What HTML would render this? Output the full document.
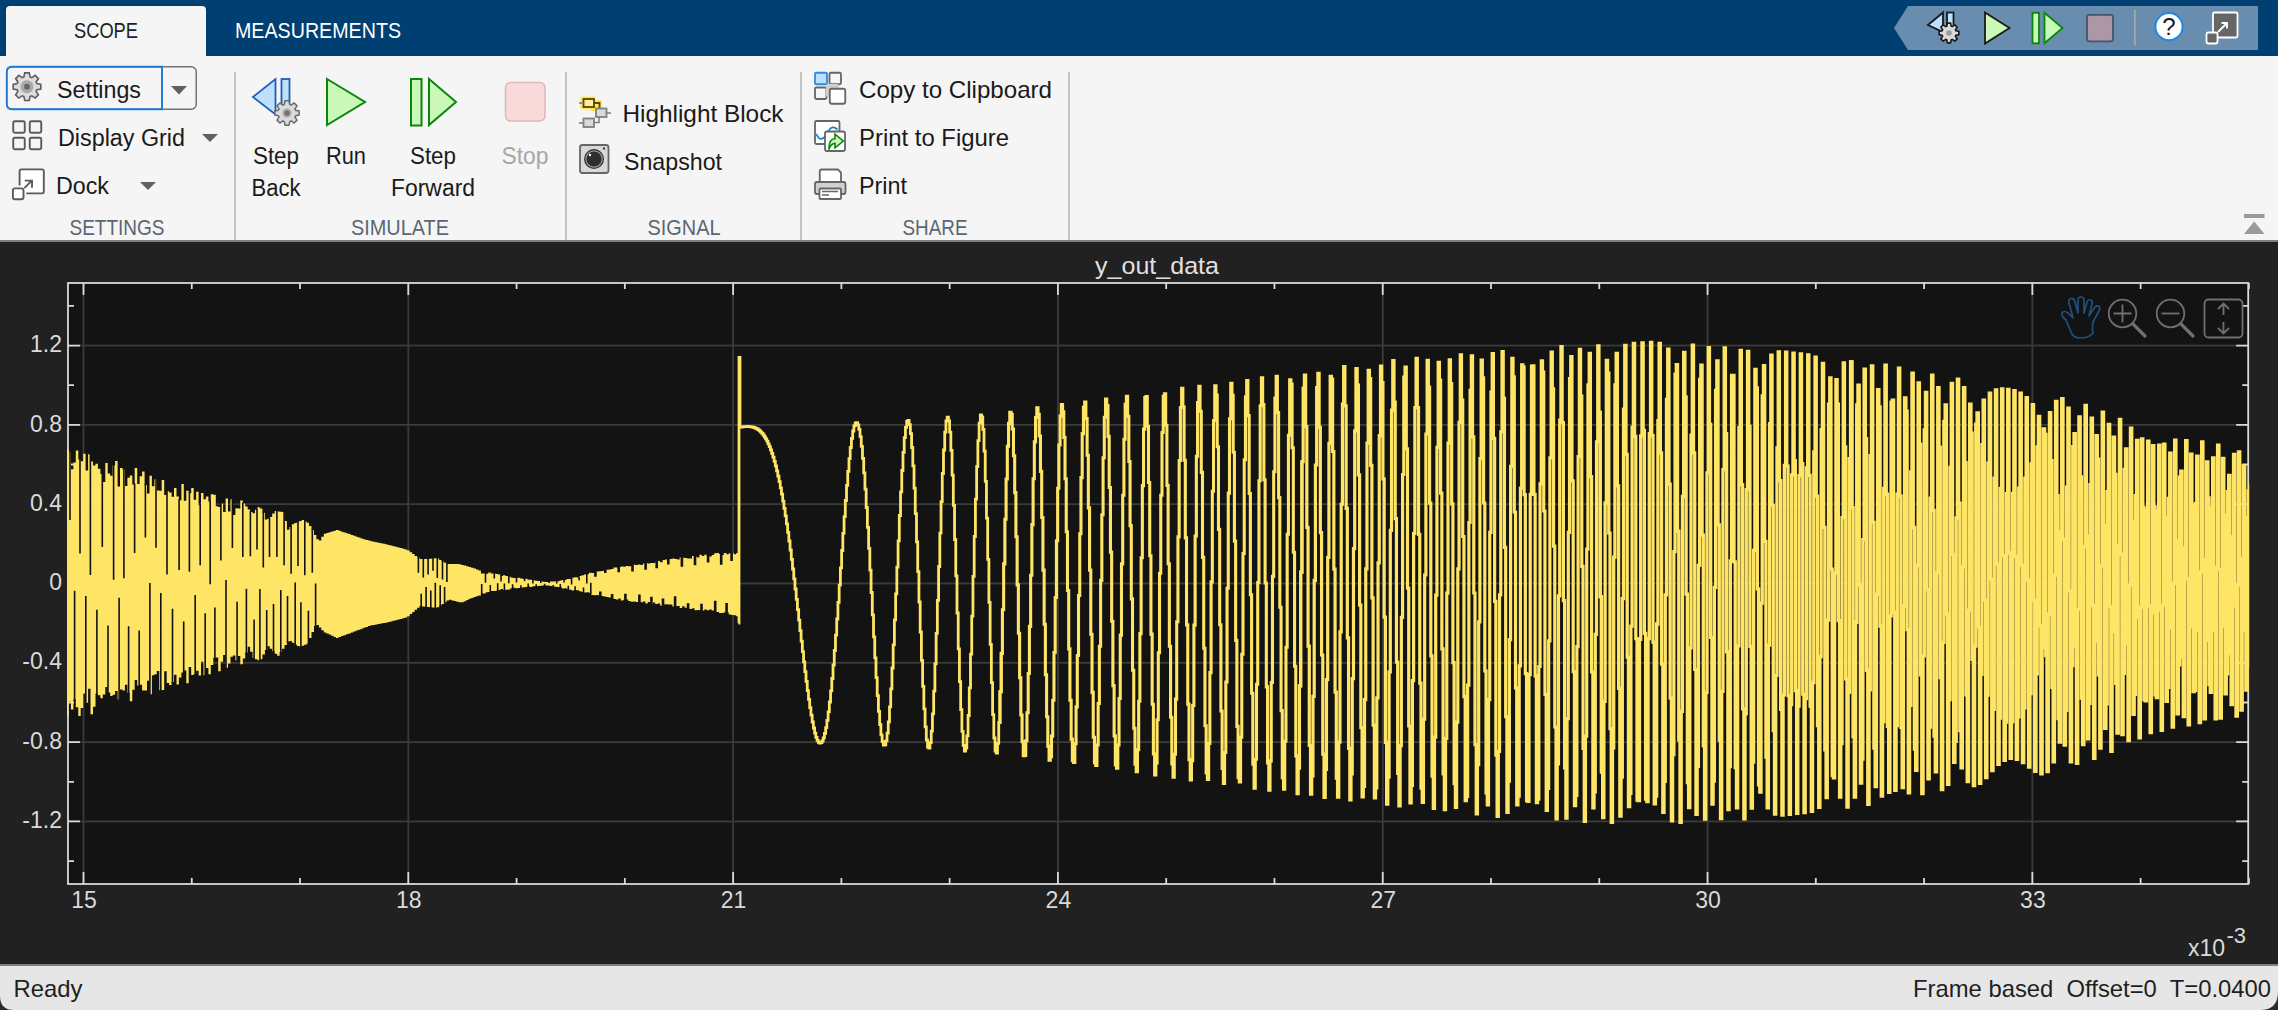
<!DOCTYPE html>
<html><head><meta charset="utf-8"><title>Scope</title>
<style>html,body{margin:0;padding:0;background:#212121;overflow:hidden;width:2278px;height:1010px}svg{display:block;font-family:"Liberation Sans",sans-serif}</style>
</head><body><svg width="2278" height="1010" viewBox="0 0 2278 1010" font-family="Liberation Sans, sans-serif"><rect x="0" y="0" width="2278" height="56" fill="#003F72"/>
<rect x="0" y="56" width="2278" height="184" fill="#F5F5F5"/>
<path d="M6 56 V10 Q6 6 10 6 H202 Q206 6 206 10 V56 Z" fill="#F5F5F5"/>
<rect x="0" y="240" width="2278" height="2" fill="#7E7E7E"/>
<rect x="0" y="242" width="2278" height="722" fill="#212121"/>
<rect x="0" y="964" width="2278" height="2" fill="#7F7F7F"/>
<rect x="0" y="966" width="2278" height="44" fill="#E6E6E6"/>
<path d="M0 996 Q0 1010 14 1010 H0 Z" fill="#2B2B2B"/>
<path d="M2278 992 Q2278 1010 2260 1010 H2278 Z" fill="#2B2B2B"/>
<text x="106" y="38" font-size="22" fill="#1F1F1F" text-anchor="middle" textLength="64" lengthAdjust="spacingAndGlyphs">SCOPE</text>
<text x="235" y="38" font-size="22" fill="#FFFFFF" textLength="166" lengthAdjust="spacingAndGlyphs">MEASUREMENTS</text>
<path d="M1894 28 L1908 6 H2258 V50 H1908 Z" fill="#688DAF"/>
<rect x="234.25" y="72" width="1.5" height="168" fill="#B3B3B3"/>
<rect x="565.25" y="72" width="1.5" height="168" fill="#B3B3B3"/>
<rect x="800.25" y="72" width="1.5" height="168" fill="#B3B3B3"/>
<rect x="1068.25" y="72" width="1.5" height="168" fill="#B3B3B3"/>
<text x="117" y="235" font-size="22" fill="#5A6673" text-anchor="middle" textLength="95" lengthAdjust="spacingAndGlyphs">SETTINGS</text>
<text x="400" y="235" font-size="22" fill="#5A6673" text-anchor="middle" textLength="98" lengthAdjust="spacingAndGlyphs">SIMULATE</text>
<text x="684" y="235" font-size="22" fill="#5A6673" text-anchor="middle" textLength="73" lengthAdjust="spacingAndGlyphs">SIGNAL</text>
<text x="935" y="235" font-size="22" fill="#5A6673" text-anchor="middle" textLength="65" lengthAdjust="spacingAndGlyphs">SHARE</text>
<rect x="6.75" y="66.75" width="189.5" height="42.5" rx="5" fill="none" stroke="#747474" stroke-width="1.5"/>
<path d="M162 66.75 H12 Q6.75 66.75 6.75 72 V104 Q6.75 109.25 12 109.25 H162 Z" fill="none" stroke="#1C7CD5" stroke-width="1.8"/>
<rect x="161.5" y="66" width="1.5" height="44" fill="#1C7CD5"/>
<path d="M36.82 83.59 L40.81 84.40 L40.81 89.00 L36.82 89.81 L36.14 91.45 L38.39 94.84 L35.14 98.09 L31.75 95.84 L30.11 96.52 L29.30 100.51 L24.70 100.51 L23.89 96.52 L22.25 95.84 L18.86 98.09 L15.61 94.84 L17.86 91.45 L17.18 89.81 L13.19 89.00 L13.19 84.40 L17.18 83.59 L17.86 81.95 L15.61 78.56 L18.86 75.31 L22.25 77.56 L23.89 76.88 L24.70 72.89 L29.30 72.89 L30.11 76.88 L31.75 77.56 L35.14 75.31 L38.39 78.56 L36.14 81.95Z" fill="#DCDCDC" stroke="#5E5E5E" stroke-width="1.6" stroke-linejoin="miter"/>
<circle cx="27" cy="86.7" r="6.5" fill="#A9A9A9"/><circle cx="27" cy="86.7" r="2.9" fill="#666"/>
<text x="57" y="98" font-size="23" fill="#1A1A1A" textLength="84" lengthAdjust="spacingAndGlyphs">Settings</text>
<path d="M171 86 H187 L179 94.5 Z" fill="#606060"/>
<rect x="13.25" y="121.25" width="11.5" height="11.5" rx="1.5" fill="none" stroke="#5A5A5A" stroke-width="1.9"/>
<rect x="13.25" y="137.75" width="11.5" height="11.5" rx="1.5" fill="none" stroke="#5A5A5A" stroke-width="1.9"/>
<rect x="29.75" y="121.25" width="11.5" height="11.5" rx="1.5" fill="none" stroke="#5A5A5A" stroke-width="1.9"/>
<rect x="29.75" y="137.75" width="11.5" height="11.5" rx="1.5" fill="none" stroke="#5A5A5A" stroke-width="1.9"/>
<text x="58" y="146" font-size="23" fill="#1A1A1A" textLength="127" lengthAdjust="spacingAndGlyphs">Display Grid</text>
<path d="M202 134 H218 L210 142 Z" fill="#606060"/>
<rect x="19.5" y="169.3" width="24.3" height="24" rx="1.8" fill="#FFFFFF"/>
<path d="M19.6 185.5 V171.2 Q19.6 169.4 21.4 169.4 H42 Q43.8 169.4 43.8 171.2 V191.6 Q43.8 193.4 42 193.4 H26.3" fill="none" stroke="#5A5A5A" stroke-width="1.9"/>
<rect x="12.9" y="188.4" width="10.6" height="10.8" rx="2" fill="#FFFFFF" stroke="#5A5A5A" stroke-width="1.9"/>
<path d="M24.3 188.2 L31.8 180.7 M24.8 180.6 H32 V187.8" fill="none" stroke="#5A5A5A" stroke-width="1.9"/>
<text x="56" y="194" font-size="23" fill="#1A1A1A" textLength="53" lengthAdjust="spacingAndGlyphs">Dock</text>
<path d="M140 182 H156 L148 190 Z" fill="#606060"/>
<path d="M253 97 L275.5 79 V114.5 Z" fill="#BDE0FF" stroke="#1F5FB5" stroke-width="1.8" stroke-linejoin="miter"/>
<rect x="281.5" y="79" width="8" height="26" fill="#BDE0FF" stroke="#1F5FB5" stroke-width="1.8"/>
<path d="M295.58 110.29 L299.13 110.98 L299.13 115.02 L295.58 115.71 L294.99 117.15 L297.01 120.15 L294.15 123.01 L291.15 120.99 L289.71 121.58 L289.02 125.13 L284.98 125.13 L284.29 121.58 L282.85 120.99 L279.85 123.01 L276.99 120.15 L279.01 117.15 L278.42 115.71 L274.87 115.02 L274.87 110.98 L278.42 110.29 L279.01 108.85 L276.99 105.85 L279.85 102.99 L282.85 105.01 L284.29 104.42 L284.98 100.87 L289.02 100.87 L289.71 104.42 L291.15 105.01 L294.15 102.99 L297.01 105.85 L294.99 108.85Z" fill="#DADADA" stroke="#6A6A6A" stroke-width="1.5" stroke-linejoin="round"/>
<circle cx="287" cy="113" r="4.5" fill="#A8A8A8"/><circle cx="287" cy="113" r="2.6" fill="#707070"/>
<path d="M327 79 L365 102 L327 125 Z" fill="#C9F8B9" stroke="#0A870A" stroke-width="2" stroke-linejoin="miter"/>
<rect x="411" y="79" width="10.5" height="46.5" fill="#C9F8B9" stroke="#0A870A" stroke-width="2"/>
<path d="M429 79 L456 102 L429 125 Z" fill="#C9F8B9" stroke="#0A870A" stroke-width="2" stroke-linejoin="miter"/>
<rect x="505.5" y="82.5" width="39.5" height="38.5" rx="5" fill="#F9DADA" stroke="#E0B6B6" stroke-width="1.5"/>
<text x="276" y="164" font-size="23" fill="#1A1A1A" text-anchor="middle" textLength="46" lengthAdjust="spacingAndGlyphs">Step</text>
<text x="276" y="196" font-size="23" fill="#1A1A1A" text-anchor="middle" textLength="49" lengthAdjust="spacingAndGlyphs">Back</text>
<text x="346" y="164" font-size="23" fill="#1A1A1A" text-anchor="middle" textLength="40" lengthAdjust="spacingAndGlyphs">Run</text>
<text x="433" y="164" font-size="23" fill="#1A1A1A" text-anchor="middle" textLength="46" lengthAdjust="spacingAndGlyphs">Step</text>
<text x="433" y="196" font-size="23" fill="#1A1A1A" text-anchor="middle" textLength="84" lengthAdjust="spacingAndGlyphs">Forward</text>
<text x="525" y="164" font-size="23" fill="#A6A6A6" text-anchor="middle" textLength="47" lengthAdjust="spacingAndGlyphs">Stop</text>
<rect x="580.5" y="96.5" width="15" height="13" rx="2" fill="#FFE650"/>
<rect x="590" y="100" width="12" height="11" rx="2" fill="#FFE650"/>
<rect x="583.5" y="99" width="10.5" height="8" fill="#FFEE99" stroke="#5C4300" stroke-width="1.8"/>
<path d="M594 103 H599.5 V109" fill="none" stroke="#5C4300" stroke-width="1.8"/>
<path d="M579 103 H583.5" stroke="#808080" stroke-width="1.6"/>
<rect x="596" y="108.5" width="10.5" height="8.5" fill="#DADADA" stroke="#808080" stroke-width="1.8"/>
<path d="M606.5 113 H611 M599 117 V122.5 H594" fill="none" stroke="#808080" stroke-width="1.6"/>
<rect x="583.5" y="118.5" width="10.5" height="8.5" fill="#DADADA" stroke="#808080" stroke-width="1.8"/>
<path d="M579 123 H583.5" stroke="#808080" stroke-width="1.6"/>
<text x="622.5" y="122" font-size="24" fill="#1A1A1A" textLength="161" lengthAdjust="spacingAndGlyphs">Highlight Block</text>
<rect x="580" y="145" width="28.5" height="28" rx="2.5" fill="#D8D8D8" stroke="#666" stroke-width="1.8"/>
<circle cx="594" cy="159" r="10" fill="#2E2E2E"/><circle cx="594" cy="159" r="8.2" fill="none" stroke="#9A9A9A" stroke-width="1.2"/>
<circle cx="590" cy="155" r="1.2" fill="#FFF"/><rect x="603" y="147.5" width="2" height="2" fill="#333"/>
<text x="624" y="170" font-size="24" fill="#1A1A1A" textLength="98" lengthAdjust="spacingAndGlyphs">Snapshot</text>
<rect x="815" y="72.75" width="12" height="11.5" rx="1" fill="#BDE0FF" stroke="#2C8BE0" stroke-width="1.8"/>
<rect x="829.5" y="72.75" width="11.5" height="11.5" rx="1.5" fill="#F5F5F5" stroke="#666" stroke-width="1.8"/>
<rect x="815" y="87.5" width="11.5" height="11.5" rx="1.5" fill="#F5F5F5" stroke="#666" stroke-width="1.8"/>
<rect x="826" y="84" width="13" height="13" rx="2" fill="#CFCFCF"/>
<rect x="829.75" y="88.75" width="15.5" height="15" rx="2" fill="#FFFFFF" stroke="#666" stroke-width="1.8"/>
<text x="859" y="98" font-size="24" fill="#1A1A1A" textLength="193" lengthAdjust="spacingAndGlyphs">Copy to Clipboard</text>
<rect x="815" y="121" width="24.5" height="23" rx="1.5" fill="#FFFFFF" stroke="#666" stroke-width="1.8"/>
<path d="M816.2 133.8 Q819 139.5 821.5 138.8 Q825 138 828.5 131 Q832 124.5 837.5 129.5" fill="none" stroke="#1A7FD1" stroke-width="1.7"/>
<rect x="825" y="131.5" width="20" height="19.5" rx="2" fill="#FFFFFF" stroke="#666" stroke-width="1.8"/>
<path d="M828.8 149.5 C828.8 142.5 831 138.8 835 138.8 V134.2 L843.3 141 L835 147.9 V143.4 C832 143.4 830 146 828.8 149.5 Z" fill="#C9F8B9" stroke="#0A870A" stroke-width="1.6" stroke-linejoin="miter"/>
<text x="859" y="146" font-size="24" fill="#1A1A1A" textLength="150" lengthAdjust="spacingAndGlyphs">Print to Figure</text>
<path d="M819.75 185 V171.5 Q819.75 169.5 821.75 169.5 H838 L841 172.5 V185" fill="#FFFFFF" stroke="#666" stroke-width="1.8"/>
<rect x="815" y="182" width="30.5" height="12" rx="2" fill="#D0D0D0" stroke="#666" stroke-width="1.8"/>
<rect x="819.5" y="188.5" width="21.5" height="10.5" rx="1" fill="#FFFFFF" stroke="#666" stroke-width="1.8"/>
<path d="M822 191.5 H838 M822 195 H829" stroke="#666" stroke-width="1.5"/>
<text x="859" y="194" font-size="24" fill="#1A1A1A" textLength="48" lengthAdjust="spacingAndGlyphs">Print</text>
<rect x="2244" y="214" width="20.5" height="4" fill="#9A9A9A"/>
<path d="M2254.2 221.5 L2264.5 234 H2244 Z" fill="#9A9A9A"/>
<path d="M1928 25 L1943 12.5 V32 Z" fill="#BDE0FF" stroke="#1A1A1A" stroke-width="1.8"/>
<rect x="1947" y="12.5" width="6.5" height="17" fill="#BDE0FF" stroke="#1A1A1A" stroke-width="1.8"/>
<path d="M1955.86 30.83 L1958.86 31.36 L1958.86 34.64 L1955.86 35.17 L1955.39 36.32 L1957.14 38.81 L1954.81 41.14 L1952.32 39.39 L1951.17 39.86 L1950.64 42.86 L1947.36 42.86 L1946.83 39.86 L1945.68 39.39 L1943.19 41.14 L1940.86 38.81 L1942.61 36.32 L1942.14 35.17 L1939.14 34.64 L1939.14 31.36 L1942.14 30.83 L1942.61 29.68 L1940.86 27.19 L1943.19 24.86 L1945.68 26.61 L1946.83 26.14 L1947.36 23.14 L1950.64 23.14 L1951.17 26.14 L1952.32 26.61 L1954.81 24.86 L1957.14 27.19 L1955.39 29.68Z" fill="#DADADA" stroke="#1A1A1A" stroke-width="1.6" stroke-linejoin="round"/>
<circle cx="1949" cy="33" r="2.8" fill="#9A9A9A"/>
<path d="M1985 12.5 L2009.5 28 L1985 43.5 Z" fill="#C9F8B9" stroke="#1A1A1A" stroke-width="1.8"/>
<rect x="2032.5" y="12.8" width="6.5" height="30.5" fill="#C9F8B9" stroke="#0A870A" stroke-width="1.8"/>
<path d="M2044.5 12.8 L2062.5 28 L2044.5 43.3 Z" fill="#C9F8B9" stroke="#0A870A" stroke-width="1.8"/>
<rect x="2087" y="14.8" width="26" height="26.5" rx="2.5" fill="#AD97A6" stroke="#44566A" stroke-width="1.8"/>
<rect x="2134.2" y="10" width="1.4" height="35.5" fill="#B8AFA3"/>
<circle cx="2169" cy="26.7" r="13.6" fill="#FFFFFF" stroke="#1E88E5" stroke-width="2"/>
<text x="2169" y="35" font-size="24" fill="#1A1A1A" text-anchor="middle">?</text>
<rect x="2213" y="12.5" width="24.5" height="25" rx="1.5" fill="#666" stroke="#FFFFFF" stroke-width="1.8"/>
<rect x="2206.5" y="32.5" width="11" height="11" rx="2" fill="#666" stroke="#FFFFFF" stroke-width="1.8"/>
<path d="M2218 32 L2227 23 M2221.5 23 H2227 V28.5" fill="none" stroke="#FFFFFF" stroke-width="1.8"/>
<rect x="68.0" y="283" width="2180.2" height="601" fill="#131313"/>
<rect x="82.60" y="283" width="1.8" height="601" fill="#3B3B3B"/>
<rect x="407.41" y="283" width="1.8" height="601" fill="#3B3B3B"/>
<rect x="732.22" y="283" width="1.8" height="601" fill="#3B3B3B"/>
<rect x="1057.03" y="283" width="1.8" height="601" fill="#3B3B3B"/>
<rect x="1381.84" y="283" width="1.8" height="601" fill="#3B3B3B"/>
<rect x="1706.65" y="283" width="1.8" height="601" fill="#3B3B3B"/>
<rect x="2031.46" y="283" width="1.8" height="601" fill="#3B3B3B"/>
<rect x="68.0" y="344.64" width="2180.2" height="1.8" fill="#3B3B3B"/>
<rect x="68.0" y="423.96" width="2180.2" height="1.8" fill="#3B3B3B"/>
<rect x="68.0" y="503.28" width="2180.2" height="1.8" fill="#3B3B3B"/>
<rect x="68.0" y="582.60" width="2180.2" height="1.8" fill="#3B3B3B"/>
<rect x="68.0" y="661.92" width="2180.2" height="1.8" fill="#3B3B3B"/>
<rect x="68.0" y="741.24" width="2180.2" height="1.8" fill="#3B3B3B"/>
<rect x="68.0" y="820.56" width="2180.2" height="1.8" fill="#3B3B3B"/>
<rect x="68.0" y="283" width="2180.2" height="601" fill="none" stroke="#D9D9D9" stroke-width="1.8"/>
<path d="M83.50 884 v-12 M83.50 283 v12 M191.77 884 v-6 M191.77 283 v6 M300.04 884 v-6 M300.04 283 v6 M408.31 884 v-12 M408.31 283 v12 M516.58 884 v-6 M516.58 283 v6 M624.85 884 v-6 M624.85 283 v6 M733.12 884 v-12 M733.12 283 v12 M841.39 884 v-6 M841.39 283 v6 M949.66 884 v-6 M949.66 283 v6 M1057.93 884 v-12 M1057.93 283 v12 M1166.20 884 v-6 M1166.20 283 v6 M1274.47 884 v-6 M1274.47 283 v6 M1382.74 884 v-12 M1382.74 283 v12 M1491.01 884 v-6 M1491.01 283 v6 M1599.28 884 v-6 M1599.28 283 v6 M1707.55 884 v-12 M1707.55 283 v12 M1815.82 884 v-6 M1815.82 283 v6 M1924.09 884 v-6 M1924.09 283 v6 M2032.36 884 v-12 M2032.36 283 v12 M2140.63 884 v-6 M2140.63 283 v6 M2248.90 884 v-6 M2248.90 283 v6 M68.0 861.12 h6 M2248.2 861.12 h-6 M68.0 821.46 h12 M2248.2 821.46 h-12 M68.0 781.80 h6 M2248.2 781.80 h-6 M68.0 742.14 h12 M2248.2 742.14 h-12 M68.0 702.48 h6 M2248.2 702.48 h-6 M68.0 662.82 h12 M2248.2 662.82 h-12 M68.0 623.16 h6 M2248.2 623.16 h-6 M68.0 583.50 h12 M2248.2 583.50 h-12 M68.0 543.84 h6 M2248.2 543.84 h-6 M68.0 504.18 h12 M2248.2 504.18 h-12 M68.0 464.52 h6 M2248.2 464.52 h-6 M68.0 424.86 h12 M2248.2 424.86 h-12 M68.0 385.20 h6 M2248.2 385.20 h-6 M68.0 345.54 h12 M2248.2 345.54 h-12 M68.0 305.88 h6 M2248.2 305.88 h-6" stroke="#D9D9D9" stroke-width="1.8" fill="none"/>
<defs><clipPath id="ax"><rect x="67.0" y="283" width="2182.2" height="601"/></clipPath></defs>
<g clip-path="url(#ax)">
<path d="M66.0 449.2 L68.5 449.2 L68.5 451.6 L70.9 451.6 L70.9 469.3 L73.4 469.3 L73.4 462.6 L75.8 462.6 L75.8 450.5 L78.3 450.5 L78.3 459.4 L80.7 459.4 L80.7 461.3 L83.2 461.3 L83.2 453.8 L85.6 453.8 L85.6 470.5 L88.1 470.5 L88.1 454.3 L90.5 454.3 L90.5 461.4 L93.0 461.4 L93.0 465.6 L95.5 465.6 L95.5 463.8 L97.9 463.8 L97.9 468.8 L100.4 468.8 L100.4 474.1 L102.8 474.1 L102.8 482.0 L105.3 482.0 L105.3 462.9 L107.7 462.9 L107.7 473.5 L110.2 473.5 L110.2 475.7 L112.6 475.7 L112.6 465.5 L115.1 465.5 L115.1 461.1 L117.6 461.1 L117.6 486.6 L120.0 486.6 L120.0 468.1 L122.5 468.1 L122.5 469.2 L124.9 469.2 L124.9 486.0 L127.4 486.0 L127.4 477.7 L129.8 477.7 L129.8 475.4 L132.3 475.4 L132.3 484.5 L134.7 484.5 L134.7 468.1 L137.2 468.1 L137.2 484.0 L139.6 484.0 L139.6 476.2 L142.1 476.2 L142.1 471.4 L144.6 471.4 L144.6 484.9 L147.0 484.9 L147.0 493.4 L149.5 493.4 L149.5 475.8 L151.9 475.8 L151.9 486.3 L154.4 486.3 L154.4 479.2 L156.8 479.2 L156.8 490.6 L159.3 490.6 L159.3 490.8 L161.7 490.8 L161.7 479.9 L164.2 479.9 L164.2 495.0 L166.7 495.0 L166.7 491.2 L169.1 491.2 L169.1 492.5 L171.6 492.5 L171.6 496.8 L174.0 496.8 L174.0 487.9 L176.5 487.9 L176.5 496.5 L178.9 496.5 L178.9 500.3 L181.4 500.3 L181.4 484.1 L183.8 484.1 L183.8 500.8 L186.3 500.8 L186.3 490.8 L188.7 490.8 L188.7 493.3 L191.2 493.3 L191.2 487.9 L193.7 487.9 L193.7 499.7 L196.1 499.7 L196.1 491.8 L198.6 491.8 L198.6 505.3 L201.0 505.3 L201.0 493.0 L203.5 493.0 L203.5 499.3 L205.9 499.3 L205.9 496.6 L208.4 496.6 L208.4 501.6 L210.8 501.6 L210.8 494.3 L213.3 494.3 L213.3 494.7 L215.8 494.7 L215.8 506.2 L218.2 506.2 L218.2 506.9 L220.7 506.9 L220.7 503.6 L223.1 503.6 L223.1 511.9 L225.6 511.9 L225.6 498.4 L228.0 498.4 L228.0 511.4 L230.5 511.4 L230.5 499.2 L232.9 499.2 L232.9 515.0 L235.4 515.0 L235.4 508.3 L237.8 508.3 L237.8 508.5 L240.3 508.5 L240.3 500.4 L242.8 500.4 L242.8 503.4 L245.2 503.4 L245.2 506.4 L247.7 506.4 L247.7 509.4 L250.1 509.4 L250.1 512.1 L252.6 512.1 L252.6 513.2 L255.0 513.2 L255.0 509.8 L257.5 509.8 L257.5 507.2 L259.9 507.2 L259.9 508.5 L262.4 508.5 L262.4 512.8 L264.9 512.8 L264.9 519.6 L267.3 519.6 L267.3 518.8 L269.8 518.8 L269.8 516.9 L272.2 516.9 L272.2 513.5 L274.7 513.5 L274.7 511.1 L277.1 511.1 L277.1 511.4 L279.6 511.4 L279.6 511.7 L282.0 511.7 L282.0 512.1 L284.5 512.1 L284.5 521.0 L286.9 521.0 L286.9 529.8 L289.4 529.8 L289.4 527.1 L291.9 527.1 L291.9 524.2 L294.3 524.2 L294.3 523.1 L296.8 523.1 L296.8 522.1 L299.2 522.1 L299.2 521.1 L301.7 521.1 L301.7 520.1 L304.1 520.1 L304.1 521.3 L306.6 521.3 L306.6 522.8 L309.0 522.8 L309.0 526.1 L311.5 526.1 L311.5 530.0 L314.0 530.0 L314.0 534.9 L316.4 534.9 L316.4 539.3 L318.9 539.3 L318.9 540.6 L321.3 540.6 L321.3 536.7 L323.8 536.7 L323.8 533.8 L326.2 533.8 L326.2 533.0 L328.7 533.0 L328.7 532.3 L331.1 532.3 L331.1 531.5 L333.6 531.5 L333.6 530.7 L336.0 530.7 L336.0 530.0 L338.5 530.0 L338.5 530.8 L341.0 530.8 L341.0 531.7 L343.4 531.7 L343.4 532.5 L345.9 532.5 L345.9 533.3 L348.3 533.3 L348.3 534.1 L350.8 534.1 L350.8 535.0 L353.2 535.0 L353.2 535.8 L355.7 535.8 L355.7 536.7 L358.1 536.7 L358.1 537.6 L360.6 537.6 L360.6 538.4 L363.1 538.4 L363.1 539.3 L365.5 539.3 L365.5 540.1 L368.0 540.1 L368.0 540.6 L370.4 540.6 L370.4 541.2 L372.9 541.2 L372.9 541.7 L375.3 541.7 L375.3 542.2 L377.8 542.2 L377.8 542.7 L380.2 542.7 L380.2 543.3 L382.7 543.3 L382.7 543.8 L385.1 543.8 L385.1 544.3 L387.6 544.3 L387.6 544.9 L390.1 544.9 L390.1 545.6 L392.5 545.6 L392.5 546.2 L395.0 546.2 L395.0 546.8 L397.4 546.8 L397.4 547.5 L399.9 547.5 L399.9 548.1 L402.3 548.1 L402.3 548.7 L404.8 548.7 L404.8 549.4 L407.2 549.4 L407.2 550.6 L409.7 550.6 L409.7 552.3 L412.2 552.3 L412.2 554.1 L414.6 554.1 L414.6 555.9 L417.1 555.9 L417.1 557.6 L419.5 557.6 L419.5 559.0 L422.0 559.0 L422.0 559.0 L424.4 559.0 L424.4 559.0 L426.9 559.0 L426.9 559.0 L429.3 559.0 L429.3 558.7 L431.8 558.7 L431.8 558.5 L434.2 558.5 L434.2 558.2 L436.7 558.2 L436.7 558.4 L439.2 558.4 L439.2 559.9 L441.6 559.9 L441.6 561.4 L444.1 561.4 L444.1 562.8 L446.5 562.8 L446.5 564.0 L449.0 564.0 L449.0 564.0 L451.4 564.0 L451.4 564.0 L453.9 564.0 L453.9 564.0 L456.3 564.0 L456.3 564.0 L458.8 564.0 L458.8 564.2 L461.3 564.2 L461.3 564.9 L463.7 564.9 L463.7 565.6 L466.2 565.6 L466.2 566.2 L468.6 566.2 L468.6 566.9 L471.1 566.9 L471.1 567.8 L473.5 567.8 L473.5 568.6 L476.0 568.6 L476.0 569.5 L478.4 569.5 L478.4 570.4 L480.9 570.4 L480.9 573.5 L483.3 573.5 L483.3 573.4 L485.8 573.4 L485.8 573.7 L488.3 573.7 L488.3 572.6 L490.7 572.6 L490.7 573.6 L493.2 573.6 L493.2 573.5 L495.6 573.5 L495.6 574.1 L498.1 574.1 L498.1 574.5 L500.5 574.5 L500.5 576.0 L503.0 576.0 L503.0 575.2 L505.4 575.2 L505.4 575.9 L507.9 575.9 L507.9 576.6 L510.4 576.6 L510.4 577.4 L512.8 577.4 L512.8 577.9 L515.3 577.9 L515.3 578.0 L517.7 578.0 L517.7 577.8 L520.2 577.8 L520.2 578.6 L522.6 578.6 L522.6 579.1 L525.1 579.1 L525.1 578.8 L527.5 578.8 L527.5 579.7 L530.0 579.7 L530.0 579.8 L532.4 579.8 L532.4 580.3 L534.9 580.3 L534.9 580.7 L537.4 580.7 L537.4 581.0 L539.8 581.0 L539.8 581.3 L542.3 581.3 L542.3 581.7 L544.7 581.7 L544.7 581.9 L547.2 581.9 L547.2 582.0 L549.6 582.0 L549.6 581.6 L552.1 581.6 L552.1 581.5 L554.5 581.5 L554.5 581.3 L557.0 581.3 L557.0 581.2 L559.5 581.2 L559.5 580.6 L561.9 580.6 L561.9 580.0 L564.4 580.0 L564.4 579.8 L566.8 579.8 L566.8 578.9 L569.3 578.9 L569.3 578.9 L571.7 578.9 L571.7 577.8 L574.2 577.8 L574.2 577.2 L576.6 577.2 L576.6 577.4 L579.1 577.4 L579.1 575.9 L581.5 575.9 L581.5 575.2 L584.0 575.2 L584.0 574.6 L586.5 574.6 L586.5 574.2 L588.9 574.2 L588.9 572.7 L591.4 572.7 L591.4 573.1 L593.8 573.1 L593.8 572.4 L596.3 572.4 L596.3 571.4 L598.7 571.4 L598.7 571.2 L601.2 571.2 L601.2 571.0 L603.6 571.0 L603.6 570.4 L606.1 570.4 L606.1 569.8 L608.6 569.8 L608.6 569.4 L611.0 569.4 L611.0 569.0 L613.5 569.0 L613.5 567.6 L615.9 567.6 L615.9 567.6 L618.4 567.6 L618.4 567.1 L620.8 567.1 L620.8 566.6 L623.3 566.6 L623.3 566.8 L625.7 566.8 L625.7 566.1 L628.2 566.1 L628.2 566.3 L630.6 566.3 L630.6 565.9 L633.1 565.9 L633.1 564.7 L635.6 564.7 L635.6 565.1 L638.0 565.1 L638.0 564.6 L640.5 564.6 L640.5 565.0 L642.9 565.0 L642.9 563.4 L645.4 563.4 L645.4 563.3 L647.8 563.3 L647.8 563.6 L650.3 563.6 L650.3 562.9 L652.7 562.9 L652.7 563.0 L655.2 563.0 L655.2 561.8 L657.7 561.8 L657.7 561.0 L660.1 561.0 L660.1 562.2 L662.6 562.2 L662.6 560.1 L665.0 560.1 L665.0 559.4 L667.5 559.4 L667.5 559.3 L669.9 559.3 L669.9 559.0 L672.4 559.0 L672.4 558.4 L674.8 558.4 L674.8 558.9 L677.3 558.9 L677.3 559.6 L679.7 559.6 L679.7 557.3 L682.2 557.3 L682.2 557.8 L684.7 557.8 L684.7 558.1 L687.1 558.1 L687.1 558.4 L689.6 558.4 L689.6 558.5 L692.0 558.5 L692.0 555.9 L694.5 555.9 L694.5 556.7 L696.9 556.7 L696.9 557.4 L699.4 557.4 L699.4 554.8 L701.8 554.8 L701.8 556.1 L704.3 556.1 L704.3 554.7 L706.8 554.7 L706.8 556.2 L709.2 556.2 L709.2 556.4 L711.7 556.4 L711.7 555.0 L714.1 555.0 L714.1 553.2 L716.6 553.2 L716.6 553.1 L719.0 553.1 L719.0 554.0 L721.5 554.0 L721.5 555.0 L723.9 555.0 L723.9 553.0 L726.4 553.0 L726.4 554.2 L728.8 554.2 L728.8 553.2 L731.3 553.2 L731.3 552.7 L733.8 552.7 L733.8 554.2 L736.2 554.2 L736.2 553.0 L738.7 553.0 L738.7 616.2 L736.2 616.2 L736.2 615.2 L733.8 615.2 L733.8 615.1 L731.3 615.1 L731.3 614.5 L728.8 614.5 L728.8 612.5 L726.4 612.5 L726.4 612.3 L723.9 612.3 L723.9 613.0 L721.5 613.0 L721.5 613.0 L719.0 613.0 L719.0 612.1 L716.6 612.1 L716.6 611.9 L714.1 611.9 L714.1 610.4 L711.7 610.4 L711.7 609.6 L709.2 609.6 L709.2 610.2 L706.8 610.2 L706.8 609.5 L704.3 609.5 L704.3 610.6 L701.8 610.6 L701.8 610.2 L699.4 610.2 L699.4 610.0 L696.9 610.0 L696.9 610.2 L694.5 610.2 L694.5 608.2 L692.0 608.2 L692.0 609.0 L689.6 609.0 L689.6 608.5 L687.1 608.5 L687.1 607.7 L684.7 607.7 L684.7 606.2 L682.2 606.2 L682.2 607.9 L679.7 607.9 L679.7 606.1 L677.3 606.1 L677.3 606.2 L674.8 606.2 L674.8 606.5 L672.4 606.5 L672.4 604.5 L669.9 604.5 L669.9 604.6 L667.5 604.6 L667.5 604.3 L665.0 604.3 L665.0 604.6 L662.6 604.6 L662.6 605.4 L660.1 605.4 L660.1 603.5 L657.7 603.5 L657.7 604.1 L655.2 604.1 L655.2 602.6 L652.7 602.6 L652.7 604.2 L650.3 604.2 L650.3 602.1 L647.8 602.1 L647.8 603.5 L645.4 603.5 L645.4 601.6 L642.9 601.6 L642.9 602.3 L640.5 602.3 L640.5 601.9 L638.0 601.9 L638.0 601.9 L635.6 601.9 L635.6 601.4 L633.1 601.4 L633.1 601.7 L630.6 601.7 L630.6 601.1 L628.2 601.1 L628.2 599.6 L625.7 599.6 L625.7 599.7 L623.3 599.7 L623.3 600.5 L620.8 600.5 L620.8 598.5 L618.4 598.5 L618.4 599.6 L615.9 599.6 L615.9 599.1 L613.5 599.1 L613.5 598.1 L611.0 598.1 L611.0 597.4 L608.6 597.4 L608.6 597.1 L606.1 597.1 L606.1 596.4 L603.6 596.4 L603.6 596.1 L601.2 596.1 L601.2 595.9 L598.7 595.9 L598.7 595.0 L596.3 595.0 L596.3 595.3 L593.8 595.3 L593.8 594.9 L591.4 594.9 L591.4 592.8 L588.9 592.8 L588.9 592.2 L586.5 592.2 L586.5 592.4 L584.0 592.4 L584.0 592.1 L581.5 592.1 L581.5 591.3 L579.1 591.3 L579.1 590.2 L576.6 590.2 L576.6 589.9 L574.2 589.9 L574.2 590.4 L571.7 590.4 L571.7 589.8 L569.3 589.8 L569.3 589.1 L566.8 589.1 L566.8 588.3 L564.4 588.3 L564.4 588.4 L561.9 588.4 L561.9 587.3 L559.5 587.3 L559.5 586.9 L557.0 586.9 L557.0 586.8 L554.5 586.8 L554.5 586.5 L552.1 586.5 L552.1 585.9 L549.6 585.9 L549.6 585.5 L547.2 585.5 L547.2 585.4 L544.7 585.4 L544.7 585.5 L542.3 585.5 L542.3 585.7 L539.8 585.7 L539.8 585.9 L537.4 585.9 L537.4 586.3 L534.9 586.3 L534.9 586.2 L532.4 586.2 L532.4 586.9 L530.0 586.9 L530.0 586.6 L527.5 586.6 L527.5 587.1 L525.1 587.1 L525.1 587.2 L522.6 587.2 L522.6 587.8 L520.2 587.8 L520.2 588.0 L517.7 588.0 L517.7 588.3 L515.3 588.3 L515.3 587.7 L512.8 587.7 L512.8 588.2 L510.4 588.2 L510.4 589.6 L507.9 589.6 L507.9 589.7 L505.4 589.7 L505.4 589.9 L503.0 589.9 L503.0 589.1 L500.5 589.1 L500.5 590.1 L498.1 590.1 L498.1 590.7 L495.6 590.7 L495.6 591.0 L493.2 591.0 L493.2 591.1 L490.7 591.1 L490.7 591.9 L488.3 591.9 L488.3 592.2 L485.8 592.2 L485.8 593.4 L483.3 593.4 L483.3 593.2 L480.9 593.2 L480.9 595.5 L478.4 595.5 L478.4 596.3 L476.0 596.3 L476.0 597.1 L473.5 597.1 L473.5 597.9 L471.1 597.9 L471.1 598.8 L468.6 598.8 L468.6 600.0 L466.2 600.0 L466.2 601.2 L463.7 601.2 L463.7 602.3 L461.3 602.3 L461.3 602.3 L458.8 602.3 L458.8 601.7 L456.3 601.7 L456.3 601.1 L453.9 601.1 L453.9 600.5 L451.4 600.5 L451.4 599.8 L449.0 599.8 L449.0 600.6 L446.5 600.6 L446.5 602.2 L444.1 602.2 L444.1 603.9 L441.6 603.9 L441.6 605.5 L439.2 605.5 L439.2 607.2 L436.7 607.2 L436.7 607.8 L434.2 607.8 L434.2 607.6 L431.8 607.6 L431.8 607.3 L429.3 607.3 L429.3 607.0 L426.9 607.0 L426.9 606.7 L424.4 606.7 L424.4 606.4 L422.0 606.4 L422.0 606.1 L419.5 606.1 L419.5 607.7 L417.1 607.7 L417.1 609.8 L414.6 609.8 L414.6 611.9 L412.2 611.9 L412.2 614.1 L409.7 614.1 L409.7 616.2 L407.2 616.2 L407.2 617.6 L404.8 617.6 L404.8 618.3 L402.3 618.3 L402.3 618.9 L399.9 618.9 L399.9 619.5 L397.4 619.5 L397.4 620.2 L395.0 620.2 L395.0 620.8 L392.5 620.8 L392.5 621.4 L390.1 621.4 L390.1 622.1 L387.6 622.1 L387.6 622.7 L385.1 622.7 L385.1 623.1 L382.7 623.1 L382.7 623.6 L380.2 623.6 L380.2 624.0 L377.8 624.0 L377.8 624.4 L375.3 624.4 L375.3 624.9 L372.9 624.9 L372.9 625.3 L370.4 625.3 L370.4 626.0 L368.0 626.0 L368.0 626.9 L365.5 626.9 L365.5 627.8 L363.1 627.8 L363.1 628.8 L360.6 628.8 L360.6 629.7 L358.1 629.7 L358.1 630.6 L355.7 630.6 L355.7 631.5 L353.2 631.5 L353.2 632.5 L350.8 632.5 L350.8 633.4 L348.3 633.4 L348.3 634.3 L345.9 634.3 L345.9 635.2 L343.4 635.2 L343.4 636.1 L341.0 636.1 L341.0 637.1 L338.5 637.1 L338.5 638.0 L336.0 638.0 L336.0 636.9 L333.6 636.9 L333.6 635.8 L331.1 635.8 L331.1 634.6 L328.7 634.6 L328.7 633.5 L326.2 633.5 L326.2 632.4 L323.8 632.4 L323.8 630.2 L321.3 630.2 L321.3 627.6 L318.9 627.6 L318.9 625.0 L316.4 625.0 L316.4 626.0 L314.0 626.0 L314.0 631.9 L311.5 631.9 L311.5 637.9 L309.0 637.9 L309.0 643.8 L306.6 643.8 L306.6 644.8 L304.1 644.8 L304.1 645.7 L301.7 645.7 L301.7 646.6 L299.2 646.6 L299.2 646.1 L296.8 646.1 L296.8 644.4 L294.3 644.4 L294.3 642.7 L291.9 642.7 L291.9 641.0 L289.4 641.0 L289.4 641.5 L286.9 641.5 L286.9 645.1 L284.5 645.1 L284.5 648.7 L282.0 648.7 L282.0 652.2 L279.6 652.2 L279.6 655.8 L277.1 655.8 L277.1 653.7 L274.7 653.7 L274.7 651.2 L272.2 651.2 L272.2 648.8 L269.8 648.8 L269.8 646.3 L267.3 646.3 L267.3 650.0 L264.9 650.0 L264.9 654.6 L262.4 654.6 L262.4 659.2 L259.9 659.2 L259.9 660.3 L257.5 660.3 L257.5 659.2 L255.0 659.2 L255.0 658.0 L252.6 658.0 L252.6 651.7 L250.1 651.7 L250.1 646.8 L247.7 646.8 L247.7 652.6 L245.2 652.6 L245.2 658.4 L242.8 658.4 L242.8 664.3 L240.3 664.3 L240.3 656.0 L237.8 656.0 L237.8 660.4 L235.4 660.4 L235.4 655.5 L232.9 655.5 L232.9 656.8 L230.5 656.8 L230.5 663.4 L228.0 663.4 L228.0 667.8 L225.6 667.8 L225.6 655.0 L223.1 655.0 L223.1 661.7 L220.7 661.7 L220.7 671.2 L218.2 671.2 L218.2 657.4 L215.8 657.4 L215.8 657.7 L213.3 657.7 L213.3 665.0 L210.8 665.0 L210.8 674.2 L208.4 674.2 L208.4 668.1 L205.9 668.1 L205.9 675.2 L203.5 675.2 L203.5 661.7 L201.0 661.7 L201.0 675.6 L198.6 675.6 L198.6 670.7 L196.1 670.7 L196.1 674.1 L193.7 674.1 L193.7 674.9 L191.2 674.9 L191.2 666.9 L188.7 666.9 L188.7 683.3 L186.3 683.3 L186.3 670.5 L183.8 670.5 L183.8 672.6 L181.4 672.6 L181.4 677.4 L178.9 677.4 L178.9 684.5 L176.5 684.5 L176.5 674.7 L174.0 674.7 L174.0 681.9 L171.6 681.9 L171.6 684.9 L169.1 684.9 L169.1 682.9 L166.7 682.9 L166.7 671.2 L164.2 671.2 L164.2 689.9 L161.7 689.9 L161.7 690.3 L159.3 690.3 L159.3 671.1 L156.8 671.1 L156.8 674.3 L154.4 674.3 L154.4 675.2 L151.9 675.2 L151.9 694.3 L149.5 694.3 L149.5 680.7 L147.0 680.7 L147.0 690.6 L144.6 690.6 L144.6 690.5 L142.1 690.5 L142.1 684.8 L139.6 684.8 L139.6 685.6 L137.2 685.6 L137.2 680.0 L134.7 680.0 L134.7 689.8 L132.3 689.8 L132.3 701.2 L129.8 701.2 L129.8 692.7 L127.4 692.7 L127.4 684.8 L124.9 684.8 L124.9 690.4 L122.5 690.4 L122.5 689.6 L120.0 689.6 L120.0 699.5 L117.6 699.5 L117.6 691.0 L115.1 691.0 L115.1 694.7 L112.6 694.7 L112.6 695.9 L110.2 695.9 L110.2 692.6 L107.7 692.6 L107.7 687.1 L105.3 687.1 L105.3 694.5 L102.8 694.5 L102.8 698.3 L100.4 698.3 L100.4 695.3 L97.9 695.3 L97.9 693.4 L95.5 693.4 L95.5 706.7 L93.0 706.7 L93.0 714.2 L90.5 714.2 L90.5 688.8 L88.1 688.8 L88.1 702.8 L85.6 702.8 L85.6 693.5 L83.2 693.5 L83.2 707.9 L80.7 707.9 L80.7 715.9 L78.3 715.9 L78.3 707.3 L75.8 707.3 L75.8 699.4 L73.4 699.4 L73.4 709.5 L70.9 709.5 L70.9 701.5 L68.5 701.5 L68.5 716.0 L66.0 716.0Z" fill="#FFE566"/>
<path d="M69.2 450.6h1.6V519.9h-1.6Z M73.8 590.8h1.6V700.4h-1.6Z M79.2 458.4h1.6V553.5h-1.6Z M85.0 596.1h1.6V703.8h-1.6Z M89.6 453.3h1.6V575.0h-1.6Z M96.1 609.7h1.6V694.4h-1.6Z M101.5 473.1h1.6V546.9h-1.6Z M107.2 625.4h1.6V693.6h-1.6Z M112.8 464.5h1.6V579.8h-1.6Z M118.3 597.8h1.6V700.5h-1.6Z M123.1 468.2h1.6V578.3h-1.6Z M127.8 626.3h1.6V693.7h-1.6Z M133.8 483.5h1.6V552.9h-1.6Z M138.4 630.4h1.6V686.6h-1.6Z M144.6 483.9h1.6V537.5h-1.6Z M149.1 582.9h1.6V695.3h-1.6Z M155.2 478.2h1.6V547.8h-1.6Z M160.0 592.9h1.6V691.3h-1.6Z M166.2 490.2h1.6V574.4h-1.6Z M171.7 608.8h1.6V682.9h-1.6Z M178.3 499.3h1.6V570.0h-1.6Z M182.9 621.6h1.6V673.6h-1.6Z M188.6 492.3h1.6V571.7h-1.6Z M194.4 594.9h1.6V675.1h-1.6Z M199.4 504.3h1.6V565.2h-1.6Z M204.4 613.2h1.6V676.2h-1.6Z M209.4 500.6h1.6V584.3h-1.6Z M214.1 607.6h1.6V658.7h-1.6Z M220.1 502.6h1.6V560.4h-1.6Z M225.2 580.0h1.6V668.8h-1.6Z M231.6 498.2h1.6V548.1h-1.6Z M236.3 601.7h1.6V661.4h-1.6Z M242.0 502.4h1.6V556.9h-1.6Z M245.6 588.8h1.6V653.6h-1.6Z M249.6 511.1h1.6V556.3h-1.6Z M253.3 619.5h1.6V659.0h-1.6Z M256.2 508.8h1.6V549.4h-1.6Z M259.1 589.1h1.6V661.3h-1.6Z M262.5 511.8h1.6V567.5h-1.6Z M265.9 610.0h1.6V651.0h-1.6Z M268.7 517.8h1.6V557.1h-1.6Z M272.7 604.0h1.6V652.2h-1.6Z M276.1 510.1h1.6V557.1h-1.6Z M280.0 590.0h1.6V653.2h-1.6Z M283.3 511.1h1.6V565.3h-1.6Z M286.7 596.0h1.6V642.5h-1.6Z M290.3 526.1h1.6V573.7h-1.6Z M294.4 582.4h1.6V645.4h-1.6Z M297.2 521.1h1.6V566.1h-1.6Z M300.1 602.3h1.6V647.6h-1.6Z M304.0 520.3h1.6V575.3h-1.6Z M307.6 610.7h1.6V644.8h-1.6Z M311.5 529.0h1.6V572.7h-1.6Z M314.8 583.6h1.6V627.0h-1.6Z M417.6 556.6h1.6V572.7h-1.6Z M420.4 593.7h1.6V607.1h-1.6Z M422.5 558.0h1.6V577.4h-1.6Z M425.3 587.0h1.6V607.7h-1.6Z M427.3 558.0h1.6V574.6h-1.6Z M430.0 590.5h1.6V608.3h-1.6Z M432.2 557.5h1.6V570.8h-1.6Z M434.5 582.7h1.6V608.8h-1.6Z M436.5 557.4h1.6V578.0h-1.6Z M439.4 585.3h1.6V606.5h-1.6Z M441.7 560.4h1.6V579.6h-1.6Z M443.8 587.0h1.6V603.2h-1.6Z M446.1 563.0h1.6V582.0h-1.6Z M480.9 584.1h1.6V594.2h-1.6Z M484.7 572.4h1.6V582.8h-1.6Z M489.5 585.1h1.6V592.9h-1.6Z M493.5 572.5h1.6V578.6h-1.6Z M496.9 583.3h1.6V591.7h-1.6Z M500.2 575.0h1.6V581.4h-1.6Z M503.6 583.6h1.6V590.9h-1.6Z M508.0 575.6h1.6V583.2h-1.6Z M511.8 584.3h1.6V589.2h-1.6Z M515.7 577.0h1.6V582.6h-1.6Z M520.1 585.2h1.6V588.8h-1.6Z M523.8 578.1h1.6V581.2h-1.6Z M527.4 583.5h1.6V587.6h-1.6Z M532.1 579.3h1.6V583.4h-1.6Z M535.4 584.3h1.6V587.3h-1.6Z M540.0 580.3h1.6V583.0h-1.6Z M543.8 583.7h1.6V586.5h-1.6Z M548.4 581.0h1.6V583.0h-1.6Z M552.4 585.1h1.6V587.5h-1.6Z M555.9 580.3h1.6V583.4h-1.6Z M559.5 584.1h1.6V588.3h-1.6Z M563.3 579.0h1.6V582.5h-1.6Z M567.5 585.8h1.6V590.1h-1.6Z M570.8 577.9h1.6V584.6h-1.6Z M574.3 586.3h1.6V590.9h-1.6Z M578.3 576.4h1.6V580.6h-1.6Z M582.7 587.5h1.6V593.1h-1.6Z M586.0 573.2h1.6V583.5h-1.6Z M590.0 582.7h1.6V593.8h-1.6Z M594.1 571.4h2.6V576.8h-2.6Z M599.0 591.4h2.6V596.9h-2.6Z M604.0 569.4h2.6V573.0h-2.6Z M610.8 594.1h2.6V599.1h-2.6Z M617.4 566.1h2.6V572.3h-2.6Z M624.1 593.7h2.6V600.7h-2.6Z M631.2 564.9h2.6V571.6h-2.6Z M638.1 594.4h2.6V602.9h-2.6Z M644.3 562.3h2.6V569.8h-2.6Z M650.1 596.8h2.6V605.2h-2.6Z M655.4 560.8h2.6V568.3h-2.6Z M661.7 598.4h2.6V605.6h-2.6Z M667.0 558.3h2.6V564.4h-2.6Z M673.8 596.3h2.6V607.2h-2.6Z M680.6 556.3h2.6V566.8h-2.6Z M686.8 603.2h2.6V609.5h-2.6Z M693.7 555.7h2.6V565.2h-2.6Z M700.2 603.8h2.6V611.2h-2.6Z M706.8 555.2h2.6V562.5h-2.6Z M713.9 600.8h2.6V612.9h-2.6Z M719.9 553.0h2.6V564.7h-2.6Z M725.3 603.0h2.6V613.5h-2.6Z M730.3 551.7h2.6V561.1h-2.6Z" fill="#131313"/>
<path d="M738.5 623.2H739.0V357.4H740.0V426.8H739.7275V427.2H740.955V427.0H742.1825V426.9H743.41V426.7H744.6375V426.6H745.865V426.6H747.0925V426.5H748.32V426.6H749.5475V426.6H750.775V426.8H752.0025V427.0H753.23V427.4H754.4575V427.8H755.685V428.4H756.9125V429.0H758.14V429.9H759.3675V430.9H760.595V432.1H761.8225V433.4H763.05V435.0H764.2775V436.8H765.505V438.9H766.7325V441.2H767.96V443.8H769.1875V446.7H770.415V449.8H771.6425V453.3H772.87V457.2H774.0975V461.3H775.325V465.9H776.5525V470.8H777.78V476.1H779.0075V481.7H780.235V487.8H781.4625V494.2H782.69V501.1H783.9175V508.3H785.145V515.9H786.3725V523.9H787.6V532.3H788.8275V541.0H790.055V550.0H791.2825V559.4H792.51V569.0H793.7375V578.9H794.965V589.0H796.1925V599.3H797.42V609.7H798.6475V620.2H799.875V630.7H801.1025V641.2H802.33V651.6H803.5575V661.8H804.785V671.7H806.0125V681.4H807.24V690.6H808.4675V699.4H809.695V707.6H810.9225V715.2H812.15V722.0H813.3775V728.0H814.605V733.1H815.8325V737.3H817.06V740.4H818.2875V742.4H819.515V743.1H820.7425000000001V742.7H821.97V740.9H823.1975V737.8H824.425V733.4H825.6525V727.6H826.88V720.4H828.1075V711.8H829.335V702.0H830.5625V690.8H831.79V678.5H833.0175V665.0H834.245V650.5H835.4725V635.1H836.7V619.0H837.9275V602.3H839.155V585.2H840.3825V567.8H841.61V550.5H842.8375V533.3H844.065V516.6H845.2925V500.5H846.52V485.3H847.7475V471.3H848.975V458.6H850.2025V447.5H851.4300000000001V438.3H852.6575V431.0H853.885V425.9H855.1125V423.1H856.34V422.7H857.5675V424.8H858.795V429.4H860.0225V436.6H861.25V446.3H862.4775V458.4H863.705V472.8H864.9325V489.2H866.16V507.5H867.3875V527.3H868.615V548.3H869.8425V570.2H871.0699999999999V592.5H872.2975V614.9H873.525V636.9H874.7525V657.9H875.98V677.7H877.2075V695.7H878.435V711.4H879.6625V724.6H880.89V734.8H882.1175000000001V741.7H883.345V745.2H884.5725V744.9H885.8V740.9H887.0275V733.2H888.255V721.8H889.4825000000001V706.9H890.71V688.8H891.9375V668.0H893.165V644.8H894.3925V619.9H895.62V593.8H896.8475V567.2H898.075V540.9H899.3025V515.5H900.53V491.8H901.7574999999999V470.5H902.985V452.3H904.2125V437.7H905.44V427.3H906.6675V421.5H907.895V420.5H909.1225V424.6H910.35V433.7H911.5775V447.5H912.8050000000001V465.8H914.0325V488.1H915.26V513.7H916.4875V541.9H917.715V571.6H918.9425V602.0H920.1700000000001V632.0H921.3975V660.4H922.625V686.4H923.8525V708.9H925.08V726.9H926.3075V739.8H927.535V747.0H928.7625V748.0H929.99V742.7H931.2175V731.2H932.4449999999999V713.8H933.6725V691.1H934.9V663.9H936.1275V633.3H937.355V600.3H938.5825V566.5H939.81V533.1H941.0375V501.7H942.265V473.5H943.4925000000001V450.0H944.72V432.2H945.9475V421.0H947.175V417.2H948.4025V420.8H949.63V432.1H950.8575000000001V450.4H952.085V475.2H953.3125V505.4H954.54V539.5H955.7675V575.9H956.995V613.0H958.2225V648.9H959.45V681.6H960.6775V709.6H961.905V731.3H963.1324999999999V745.4H964.36V751.1H965.5875V748.0H966.815V735.9H968.0425V715.5H969.27V687.8H970.4975V654.1H971.725V616.2H972.9525V576.3H974.1800000000001V536.5H975.4075V499.2H976.635V466.6H977.8625V440.7H979.09V423.1H980.3175V415.0H981.5450000000001V417.0H982.7725V429.3H984.0V451.1H985.2275V481.4H986.455V518.2H987.6825V559.4H988.91V602.4H990.1375V644.4H991.365V682.7H992.5925V714.7H993.8199999999999V738.0H995.0475V751.2H996.2750000000001V753.0H997.5025V743.3H998.73V722.4H999.9575V691.8H1001.185V653.4" fill="none" stroke="#FFE566" stroke-width="2.8" stroke-linejoin="miter" stroke-linecap="butt"/>
<path d="M998.73 722.4H999.9575V691.8H1001.185V653.4H1002.4125V609.7H1003.64V563.9H1004.8675000000001V519.3H1006.095V479.0H1007.3225V446.2H1008.55V423.4H1009.7775V412.4H1011.005V414.2H1012.2325000000001V429.0H1013.46V455.8H1014.6875V492.6H1015.915V536.8H1017.1424999999999V584.9H1018.37V633.2H1019.5975000000001V677.8H1020.825V715.0H1022.0525V741.8H1023.28V755.7H1024.5075V755.4H1025.7350000000001V740.7H1026.9625V712.7H1028.19V673.5H1029.4175V626.4H1030.645V575.3H1031.8725V524.6H1033.1V478.7H1034.3274999999999V441.9H1035.555V417.5H1036.7825V407.9H1038.01V414.2H1039.2375V436.0H1040.4650000000001V471.4H1041.6925V517.5H1042.92V570.1H1044.1475V624.2H1045.375V674.7H1046.6025V716.8H1047.83V746.3H1049.0575V760.1H1050.285V756.7H1051.5125V736.1H1052.74V700.3H1053.9675V652.5H1055.195V597.5H1056.4225000000001V540.8H1057.65V488.2H1058.8775V445.0H1060.105V416.1H1061.3325V404.6H1062.56V411.8H1063.7875V437.4H1065.0149999999999V478.8H1066.2425V531.7H1067.47V590.5H1068.6975V648.9H1069.925V700.3H1071.1525000000001V739.1H1072.38V760.7H1073.6075V762.4H1074.835V743.8H1076.0625V706.9H1077.29V655.5H1078.5175V595.5H1079.745V533.8H1080.9725V477.6H1082.2V433.6H1083.4275V407.3H1084.655V402.0H1085.8825V418.6H1087.1100000000001V455.3H1088.3375V507.9H1089.565V570.1H1090.7925V634.3H1092.02V692.4H1093.2475V737.2H1094.475V762.7H1095.7024999999999V765.5H1096.93V745.0H1098.1575V703.5H1099.385V646.2H1100.6125V580.4H1101.8400000000001V514.7H1103.0675V457.7H1104.295V417.3H1105.5225V399.0H1106.75V405.6H1107.9775V436.4H1109.205V487.5H1110.4325V552.1H1111.66V621.3H1112.8875V685.6H1114.115V735.9H1115.3425V764.9H1116.57V768.2H1117.7975000000001V745.0H1119.025V698.5H1120.2525V635.1H1121.48V563.9H1122.7075V495.2H1123.935V439.2H1125.1625V404.4H1126.3899999999999V396.2H1127.6175V416.2H1128.845V461.5H1130.0725V525.6H1131.3V598.9H1132.5275000000001V670.2H1133.755V728.3H1134.9825V764.1H1136.21V771.8H1137.4375V749.7H1138.665V701.2H1139.8925V633.6H1141.12V557.7H1142.3475V485.6H1143.575V429.1H1144.8025V397.6H1146.03V396.5H1147.2575V426.3H1148.4850000000001V482.5H1149.7125V555.8H1150.94V634.1H1152.1675V704.2H1153.395V754.0H1154.6225V774.9H1155.85V762.9H1157.0774999999999V719.7H1158.305V652.7H1159.5325V573.2H1160.76V495.2H1161.9875V432.5H1163.2150000000001V396.4H1164.4425V393.7H1165.67V425.2H1166.8975V485.4H1168.125V563.8H1169.3525V646.2H1170.58V717.3H1171.8075V764.0H1173.035V777.3H1174.2625V754.3H1175.49V699.1H1176.7175V621.8H1177.945V536.9H1179.1725000000001V460.5H1180.4V407.5H1181.6275V388.3H1182.855V406.9H1184.0825V460.2H1185.31V537.9H1186.5375V624.9H1187.7649999999999V704.1H1188.9925V759.6H1190.22V779.9H1191.4475V760.7H1192.675V705.5H1193.9025000000001V625.1H1195.13V536.0H1196.3575V456.2H1197.585V402.5H1198.8125V386.2H1200.04V411.2H1201.2675V472.4H1202.495V557.4H1203.7225V648.3H1204.95V725.7H1206.1775V772.9H1207.405V779.5H1208.6325V743.5H1209.8600000000001V672.6H1211.0875V581.9H1212.315V491.2H1213.5425V420.5H1214.77V385.8H1215.9975V395.1H1217.225V446.7H1218.4524999999999V529.4H1219.68V624.7H1220.9075V711.0H1222.135V768.4H1223.3625V783.5H1224.5900000000001V752.5H1225.8175V682.0H1227.045V588.3H1228.2725V493.1H1229.5V418.8H1230.7275V383.3H1231.955V395.2H1233.1825V452.3H1234.41V541.1H1235.6375V640.4H1236.865V726.4H1238.0925V777.8H1239.32V781.9H1240.5475000000001V737.1H1241.775V654.3H1243.0025V553.5H1244.23V459.8H1245.4575V396.8H1246.685V380.6H1247.9125V415.6H1249.1399999999999V493.5H1250.3675V594.7H1251.595V693.3H1252.8225V764.1H1254.0500000000002V788.3H1255.2775000000001V759.3H1256.505V684.3H1257.7325V582.6H1258.96V480.7H1260.1875V405.7H1261.415V377.7H1262.6425V404.6H1263.87V479.7H1265.0974999999999V583.0H1266.325V686.9H1267.5525V763.0H1268.78V790.3H1270.0075000000002V760.9H1271.2350000000001V682.5H1272.4625V576.4H1273.69V471.8H1274.9175V398.1H1276.145V376.2H1277.3725V412.6H1278.6V497.6H1279.8274999999999V607.3H1281.055V710.6H1282.2825V777.8H1283.51V789.3H1284.7375000000002V741.2H1285.9650000000001V647.2H1287.1925V534.2H1288.42V435.3H1289.6475V379.7H1290.875V384.1H1292.1025V447.8H1293.33V552.2H1294.5575V666.3H1295.7849999999999V755.9H1297.0125V793.8H1298.24V768.0H1299.4675V685.9H1300.6950000000002V572.2H1301.9225000000001V461.6" fill="none" stroke="#FFE566" stroke-width="3.1" stroke-linejoin="miter" stroke-linecap="butt"/>
<path d="M1298.24 768.0H1299.4675V685.9H1300.6950000000002V572.2H1301.9225000000001V461.6H1303.15V388.2H1304.3775V375.0H1305.605V426.6H1306.8325V527.4H1308.06V646.1H1309.2875V745.5H1310.5149999999999V794.1H1311.7425V775.9H1312.97V696.3H1314.1975V580.4H1315.4250000000002V465.0H1316.6525000000001V387.5H1317.88V373.3H1319.1075V427.4H1320.335V532.7H1321.5625V655.0H1322.79V754.2H1324.0175V797.3H1325.245V769.5H1326.4724999999999V679.7H1327.7V557.4H1328.9275V443.4H1330.155V376.3H1331.3825000000002V379.2H1332.6100000000001V451.5H1333.8375V569.1H1335.065V692.1H1336.2925V778.1H1337.52V797.1H1338.7475V742.2H1339.975V631.8H1341.2024999999999V504.2H1342.43V404.0H1343.6575V366.7H1344.885V405.9H1346.1125000000002V508.3H1347.3400000000001V637.9H1348.5675V748.4H1349.795V800.0H1351.0225V773.8H1352.25V678.6H1353.4775V548.6H1354.705V430.9H1355.9325V368.6H1357.1599999999999V385.1H1358.3875V474.8H1359.615V605.1H1360.8425V727.7H1362.0700000000002V796.9H1363.2975000000001V786.5H1364.525V699.7H1365.7525V568.8H1366.98V443.1H1368.2075V370.3H1369.435V378.6H1370.6625V465.4H1371.8899999999999V597.8H1373.1175V725.2H1374.345V798.0H1375.5725V787.8H1376.8000000000002V697.8H1378.0275000000001V562.8H1379.255V435.6H1380.4825V366.2H1381.71V382.6H1382.9375V478.9H1384.165V617.1H1385.3925V742.3H1386.62V804.1H1387.8474999999999V777.1H1389.075V671.8H1390.3025V530.4H1391.53V410.2H1392.7575000000002V360.6H1393.9850000000001V402.2H1395.2125V518.6H1396.44V662.1H1397.6675V773.4H1398.895V805.9H1400.1225V745.7H1401.35V617.4H1402.5774999999999V474.5H1403.805V377.2H1405.0325V367.0H1406.26V448.8H1407.4875000000002V588.2H1408.7150000000001V726.0H1409.9425V802.9H1411.17V785.5H1412.3975V680.7H1413.625V533.5H1414.8525V407.6H1416.08V358.3H1417.3075V407.6H1418.5349999999999V534.4H1419.7625V683.2H1420.99V788.2H1422.2175V802.5H1423.4450000000002V719.2H1424.6725000000001V575.0H1425.9V434.2H1427.1275V360.3H1428.355V387.2H1429.5825V503.1H1430.81V655.9H1432.0375V776.1H1433.2649999999999V808.3H1434.4925V737.2H1435.72V595.1H1436.9475V447.3H1438.1750000000002V362.3H1439.4025000000001V380.2H1440.63V493.2H1441.8575V648.8H1443.085V774.0H1444.3125V809.7H1445.54V738.3H1446.7675V593.1H1447.995V443.1H1449.2224999999999V359.8H1450.45V383.7H1451.6775V503.8H1452.905V662.7H1454.1325000000002V783.6H1455.3600000000001V807.5H1456.5875V722.2H1457.815V568.8H1459.0425V422.3H1460.27V354.8H1461.4975V400.1H1462.725V536.5H1463.9524999999999V696.6H1465.18V800.6H1466.4075V796.3H1467.635V685.1H1468.8625000000002V522.5H1470.0900000000001V390.3H1471.3175V355.8H1472.545V436.9H1473.7725V593.0H1475.0V744.6H1476.2275V813.9H1477.455V764.7H1478.6825V621.8H1479.9099999999999V458.7H1481.1375V360.1H1482.365V377.8H1483.5925V503.0H1484.8200000000002V670.8H1486.0475000000001V793.0H1487.275V804.9H1488.5025V699.6H1489.73V532.4H1490.9575V392.0H1492.185V353.6H1493.4125V438.4H1494.6399999999999V601.4H1495.8675V755.1H1497.095V816.3H1498.3225V751.3H1499.5500000000002V594.8H1500.7775000000001V431.8H1502.005V351.5H1503.2325V398.4H1504.46V547.4H1505.6875V716.7H1506.915V812.5H1508.1425V781.2H1509.37V639.6H1510.5974999999999V466.3H1511.825V358.3H1513.0525V376.8H1514.28V512.0H1515.5075000000002V687.9H1516.7350000000001V805.0H1517.9625V796.2H1519.19V665.9H1520.4175V488.2H1521.645V364.8H1522.8725V367.2H1524.1V494.6H1525.3274999999999V673.6H1526.555V800.6H1527.7825V801.3H1529.01V674.7H1530.2375000000002V494.4H1531.4650000000001V366.2H1532.6925V365.9H1533.92V494.3H1535.1475V675.8H1536.375V802.7H1537.6025V799.1H1538.83V666.5H1540.0575V483.9H1541.2849999999999V360.9H1542.5125V372.0H1543.74V511.0H1544.9675V694.3H1546.1950000000002V810.4H1547.4225000000001V788.3H1548.65V640.8H1549.8775V457.9H1551.105V352.0H1552.3325V388.8H1553.56V546.2H1554.7875V727.0H1556.0149999999999V818.8H1557.2425V763.8H1558.47V595.9H1559.6975V420.0H1560.9250000000002V346.6H1562.1525000000001V422.7H1563.38V600.7H1564.6075V768.0H1565.835V818.2H1567.0625V718.6H1568.29V532.4H1569.5175V378.7H1570.745V356.5H1571.9724999999999V480.8H1573.2V671.7H1574.4275V805.7H1575.655V795.3H1576.8825000000002V646.7H1578.1100000000001V456.6H1579.3375V349.3H1580.565V396.0H1581.7925V566.4H1583.02V748.4H1584.2475V821.3H1585.475V736.2H1586.7024999999999V549.2H1587.93V384.8H1589.1575V353.4H1590.385V476.6H1591.6125000000002V672.0H1592.8400000000001V808.0H1594.0675V792.0H1595.295V634.4H1596.5225V441.8H1597.75V345.8H1598.9775V412.3H1600.205V596.6H1601.4325V772.1" fill="none" stroke="#FFE566" stroke-width="3.2" stroke-linejoin="miter" stroke-linecap="butt"/>
<path d="M1598.9775 412.3H1600.205V596.6H1601.4325V772.1H1602.66V817.7H1603.8875V701.3H1605.115V503.0H1606.3425V360.4H1607.5700000000002V373.2H1608.7975000000001V533.2H1610.025V728.6H1611.2525V822.3H1612.48V747.8H1613.7075V557.1H1614.935V384.8H1616.1625V353.4H1617.3899999999999V485.9H1618.6175V688.3H1619.845V816.0H1621.0725V777.0H1622.3000000000002V598.7H1623.5275000000001V409.2H1624.755V345.5H1625.9825V454.3H1627.21V657.2H1628.4375V806.7H1629.665V793.3H1630.8925V626.1H1632.12V427.4H1633.3475V343.4H1634.575V436.5H1635.8025V638.6H1637.03V800.1H1638.2575000000002V800.7H1639.4850000000001V639.3H1640.7125V436.0H1641.94V342.9H1643.1675V430.5H1644.395V633.4H1645.6225V799.0H1646.85V801.6H1648.0774999999999V638.7H1649.305V433.6H1650.5325V342.5H1651.76V435.6H1652.9875000000002V642.2H1654.2150000000001V803.9H1655.4425V796.0H1656.67V624.0H1657.8975V420.7H1659.125V343.5H1660.3525V453.0H1661.58V664.2H1662.8075V812.4H1664.035V781.3H1665.2625V594.9H1666.49V399.5H1667.7175V349.2H1668.9450000000002V484.2H1670.1725000000001V698.0H1671.4V820.8H1672.6275V754.6H1673.855V551.7H1675.0825V374.2H1676.31V364.6H1677.5375V531.1H1678.7649999999999V739.9H1679.9925V822.3H1681.22V711.3H1682.4475V496.5H1683.6750000000002V352.4H1684.9025000000001V396.9H1686.13V594.1H1687.3575V782.6H1688.585V807.5H1689.8125V647.9H1691.04V435.1H1692.2675V345.1H1693.495V452.9H1694.7225V669.3H1695.95V814.3H1697.1775V766.4H1698.405V565.4H1699.6325000000002V379.5H1700.8600000000001V365.2H1702.0875V535.1H1703.315V745.9H1704.5425V819.1H1705.77V692.3H1706.9975V472.8H1708.225V347.7H1709.4524999999999V424.3H1710.68V637.4H1711.9075V804.2H1713.135V781.0H1714.3625000000002V587.3H1715.5900000000001V390.3H1716.8175V360.8H1718.045V524.8H1719.2725V740.0H1720.5V818.6H1721.7275V691.4H1722.955V469.6H1724.1825V347.9H1725.41V433.7H1726.6375V651.8H1727.865V809.5H1729.0925V766.7H1730.3200000000002V561.0H1731.5475000000001V375.3H1732.775V375.5H1734.0025V561.9H1735.23V767.6H1736.4575V807.9H1737.685V645.9H1738.9125V427.6H1740.1399999999999V350.4H1741.3675V484.6H1742.595V708.8H1743.8225V818.8H1745.0500000000002V713.9H1746.2775000000001V489.6H1747.505V351.4H1748.7325V426.5H1749.96V646.3H1751.1875V808.1H1752.415V762.0H1753.6425V550.4H1754.87V369.5H1756.0975V387.9H1757.325V588.9H1758.5525V784.9H1759.78V792.0H1761.0075000000002V603.2H1762.2350000000001V395.9H1763.4625V365.6H1764.69V541.4H1765.9175V757.1H1767.145V807.8H1768.3725V645.0H1769.6000000000001V423.6H1770.8275V355.2H1772.055V505.4H1773.2825V730.6H1774.51V814.1H1775.7375V675.3H1776.965V447.9H1778.1925V351.9H1779.42V480.7H1780.6475V709.3H1781.875V815.2H1783.1025V694.8H1784.33V465.5H1785.5575000000001V352.1H1786.785V466.1H1788.0125V695.6H1789.24V814.4H1790.4675V704.7H1791.695V475.0H1792.9225000000001V353.2H1794.15V460.6H1795.3775V690.5H1796.605V813.4H1797.8325V706.0H1799.06V475.7H1800.2875000000001V354.0H1801.515V463.6H1802.7425V694.2H1803.97V812.6H1805.1975V698.7H1806.425V467.8H1807.6525V354.9H1808.88V475.3H1810.1075V706.2H1811.335V811.3H1812.5625V682.5H1813.79V451.9H1815.0175V357.1H1816.2450000000001V496.2H1817.4725V725.5H1818.7V807.4H1819.9275V656.5H1821.155V429.7H1822.3825V363.5H1823.6100000000001V527.3H1824.8375V749.9H1826.065V797.6H1827.2925V620.1H1828.52V404.1H1829.7475V377.8H1830.9750000000001V569.1H1832.2025V775.6H1833.43V777.8H1834.6575V573.2H1835.885V379.7H1837.1125V404.2H1838.3400000000001V620.7H1839.5675V797.1H1840.795V743.7H1842.0225V517.7H1843.25V362.9H1844.4775V446.8H1845.705V678.8H1846.9325000000001V807.1H1848.16V692.0H1849.3875V458.7H1850.615V361.9H1851.8425V507.7" fill="none" stroke="#FFE566" stroke-width="3.3" stroke-linejoin="miter" stroke-linecap="butt"/>
<path d="M1848.16 692.0H1849.3875V458.7H1850.615V361.9H1851.8425V507.7H1853.07V736.6H1854.2975000000001V797.0H1855.525V622.3H1856.7525V404.9H1857.98V385.1H1859.2075V585.0H1860.435V783.1H1861.6625000000001V759.1H1862.89V539.6H1864.1175V369.2H1865.345V438.6H1866.5725V670.3H1867.8V804.4H1869.0275000000001V689.9H1870.255V455.6H1871.4825V365.9H1872.71V522.4H1873.9375V748.0H1875.165V786.6H1876.3925V594.1H1877.6200000000001V389.8H1878.8475V407.0H1880.075V626.1H1881.3025V796.0H1882.53V721.6H1883.7575V488.5H1884.9850000000001V365.3H1886.2125V494.2H1887.44V726.2H1888.6675V792.3H1889.895V615.9H1891.1225V402.1H1892.3500000000001V400.1H1893.5775V612.3H1894.805V790.4H1896.0325V725.6H1897.26V494.1H1898.4875V368.2H1899.7150000000001V496.3H1900.9425V727.2H1902.17V787.6H1903.3975V606.0H1904.625V398.0H1905.8525V411.1H1907.08V629.6H1908.3075000000001V792.7H1909.535V705.2H1910.7625V472.0H1911.99V373.2H1913.2175V527.5H1914.445V749.0H1915.6725000000001V770.3H1916.9V565.6H1918.1275V383.0H1919.355V444.2H1920.5825V674.7H1921.81V793.6H1923.0375000000001V655.9H1924.265V429.9H1925.4925V392.5H1926.72V589.6H1927.9475V778.8H1929.175V727.0H1930.4025000000001V498.3H1931.63V375.3H1932.8575V510.4H1934.085V736.0H1935.3125V771.7H1936.54V572.9H1937.7675V387.6H1938.9950000000001V447.3H1940.2225V677.5H1941.45V789.5H1942.6775V642.4H1943.905V421.4H1945.1325V405.0H1946.3600000000001V614.2H1947.5875V784.3H1948.815V699.5H1950.0425V467.5H1951.27V383.4H1952.4975V554.4H1953.7250000000001V762.4H1954.9525V741.3H1956.18V518.0H1957.4075V379.1H1958.635V503.2H1959.8625V730.5H1961.0900000000001V767.9H1962.3175V566.8H1963.545V387.6H1964.7725V462.7H1966.0V694.7H1967.2275V781.6H1968.455V610.1H1969.6825000000001V404.1H1970.91V433.1H1972.1375V659.2H1973.365V785.6H1974.5925V646.1H1975.82V424.3H1977.0475000000001V412.9H1978.275V627.1H1979.5025V783.3H1980.73V674.3H1981.9575V444.8H1983.185V400.2H1984.4125000000001V600.1H1985.64V777.5H1986.8675V695.1H1988.095V463.3H1989.3225V393.2H1990.55V579.1H1991.7775000000001V770.6H1993.005V709.4H1994.2325V478.2H1995.46V389.9H1996.6875V564.3H1997.915V764.4H1999.1425V718.1H2000.3700000000001V488.4H2001.5975V389.0H2002.825V555.6H2004.0525V760.2H2005.28V722.0H2006.5075V493.6H2007.7350000000001V389.4H2008.9625V553.0H2010.19V758.4H2011.4175V721.6H2012.645V493.5H2013.8725V390.7H2015.1000000000001V556.2H2016.3275V759.3H2017.555V716.9H2018.7825V488.2H2020.01V393.2H2021.2375V565.1H2022.4650000000001V762.5H2023.6925V707.8H2024.92V478.1H2026.1475V397.6H2027.375V579.9H2028.6025V767.0H2029.83V693.6H2031.0575000000001V464.0H2032.285V404.8H2033.5125V600.2H2034.74V771.4H2035.9675V673.7H2037.195V447.0H2038.4225000000001V416.5H2039.65V625.8H2040.8775V773.9H2042.105V647.4H2043.3325V429.0H2044.56V434.4H2045.7875000000001V655.5H2047.015V771.5H2048.2425000000003V614.2H2049.4700000000003V412.8H2050.6975V460.6H2051.925V687.4H2053.1525V761.7H2054.38V575.1H2055.6075V401.4H2056.835V495.6H2058.0625V718.6H2059.29V742.0H2060.5175V531.6H2061.745V398.6H2062.9725V539.5H2064.2V745.1H2065.4275V710.2H2066.6549999999997V487.2H2067.8824999999997V408.3H2069.11V590.9H2070.3375V761.8H2071.565V665.5H2072.7925V446.8H2074.02V433.8H2075.2475V645.8H2076.4750000000004V763.3H2077.7025000000003V609.4H2078.9300000000003V417.0H2080.1575000000003V477.0H2081.385V698.0H2082.6125V744.6H2083.84V546.4H2085.0675V405.4H2086.295V536.1H2087.5225V738.7H2088.75V703.4H2089.9775V484.8H2091.205V418.3H2092.4325V605.6H2093.66V758.3H2094.8875V641.3H2096.115V435.6H2097.3424999999997V459.1H2098.5699999999997V674.8H2099.7975V748.0H2101.025V565.9H2102.2525V412.3H2103.48V525.7H2104.7075V728.3H2105.935V703.9H2107.1625000000004V491.8H2108.3900000000003V424.5H2109.6175000000003V606.5H2110.8450000000003V751.2H2112.0725V631.6H2113.3V437.2H2114.5275V474.5H2115.755V683.4H2116.9825V733.1H2118.21V545.8H2119.4375V419.5H2120.665V554.2H2121.8925V734.5H2123.12V673.3H2124.3475V469.4H2125.575V449.0H2126.8025V643.6H2128.0299999999997V740.6H2129.2574999999997V585.1H2130.485V428.1H2131.7125V522.0H2132.94V714.2H2134.1675V694.3H2135.395V495.7H2136.6225V440.5H2137.8500000000004V617.2H2139.0775000000003V737.9H2140.3050000000003V607.0H2141.5325000000003V438.9H2142.76V507.5H2143.9875V699.5H2145.215V700.7H2146.4425V510.2H2147.67V441.2H2148.8975V606.1H2150.125V732.6H2151.3525V612.9H2152.58V445.7H2153.8075V506.9H2155.035V694.7H2156.2625V697.6H2157.49V510.9H2158.7174999999997V445.3H2159.9449999999997V610.1H2161.1725V730.2H2162.4V605.0H2163.6275V444.1H2164.855V517.1H2166.0825V701.4H2167.31V687.3H2168.5375000000004V498.5H2169.7650000000003V453.3H2170.9925000000003V627.9H2172.2200000000003V727.1H2173.4475V583.2H2174.675V440.1H2175.9025V540.7H2177.13V713.9H2178.3575V664.9H2179.585V477.3H2180.8125V471.3H2182.04V657.0H2183.2675V716.6H2184.495V548.0H2185.7225V440.7H2186.95V579.0H2188.1775V724.8H2189.4049999999997V626.8H2190.6324999999997V454.3H2191.86V505.4H2193.0875V691.6H2194.315V690.2H2195.5425V503.7H2196.77V456.3H2197.9975V630.3H2199.2250000000004V722.5H2200.4525000000003V572.0H2201.6800000000003V441.9H2202.9075000000003V559.8H2204.135V718.9H2205.3625V640.2H2206.59V462.0H2207.8175V497.9H2209.045V684.5H2210.2725V692.4H2211.5V508.2H2212.7275V457.9H2213.955V629.9H2215.1825V718.9H2216.41V567.4H2217.6375V445.2H2218.865V569.5H2220.0924999999997V718.1H2221.3199999999997V626.0H2222.5475V458.5H2223.775V515.2H2225.0025V693.8H2226.23V673.8H2227.4575V491.8H2228.685V475.5H2229.9125000000004V653.6H2231.1400000000003V704.5H2232.3675000000003V536.9H2233.5950000000003V454.4H2234.8225V605.9H2236.05V716.0H2237.2775V585.3H2238.505V452.0H2239.7325V558.5H2240.96V710.0H2242.1875V630.1H2243.415V465.6H2244.6425V517.5H2245.87V690.0H2247.0975V666.4H2248.325V490.9H2249.5525V486.5H2250.7799999999997V660.8" fill="none" stroke="#FFE566" stroke-width="3.4" stroke-linejoin="miter" stroke-linecap="butt"/>
</g>
<text x="62" y="352.1" font-size="23" fill="#DADADA" text-anchor="end">1.2</text>
<text x="62" y="431.5" font-size="23" fill="#DADADA" text-anchor="end">0.8</text>
<text x="62" y="510.8" font-size="23" fill="#DADADA" text-anchor="end">0.4</text>
<text x="62" y="590.1" font-size="23" fill="#DADADA" text-anchor="end">0</text>
<text x="62" y="669.4" font-size="23" fill="#DADADA" text-anchor="end">-0.4</text>
<text x="62" y="748.7" font-size="23" fill="#DADADA" text-anchor="end">-0.8</text>
<text x="62" y="828.1" font-size="23" fill="#DADADA" text-anchor="end">-1.2</text>
<text x="84.0" y="908" font-size="23" fill="#DADADA" text-anchor="middle">15</text>
<text x="408.8" y="908" font-size="23" fill="#DADADA" text-anchor="middle">18</text>
<text x="733.6" y="908" font-size="23" fill="#DADADA" text-anchor="middle">21</text>
<text x="1058.4" y="908" font-size="23" fill="#DADADA" text-anchor="middle">24</text>
<text x="1383.2" y="908" font-size="23" fill="#DADADA" text-anchor="middle">27</text>
<text x="1708.0" y="908" font-size="23" fill="#DADADA" text-anchor="middle">30</text>
<text x="2032.9" y="908" font-size="23" fill="#DADADA" text-anchor="middle">33</text>
<text x="2188" y="956" font-size="23" fill="#DADADA">x10</text>
<text x="2226.5" y="942.5" font-size="22" fill="#DADADA">-3</text>
<text x="1157" y="274" font-size="24.5" fill="#E0E0E0" text-anchor="middle" textLength="124" lengthAdjust="spacingAndGlyphs">y_out_data</text>
<path d="M2066 320 Q2061 316 2062 313 Q2064 310 2068 313 L2073 318 L2069 303 Q2068 299 2071 298.5 Q2074 298 2075 302 L2078 313 L2078 300 Q2078 297 2081 297 Q2084 297 2084 300 L2084 313 L2087 302 Q2088 299 2091 300 Q2093 301 2092 304 L2089 316 L2095 307 Q2097 305 2099 306.5 Q2100.5 308 2099 311 L2093 322 Q2092 330 2093 333 Q2089 338 2080 338 Q2073 338 2071 332 Z" fill="none" stroke="#22507C" stroke-width="1.7" stroke-linejoin="round"/>
<circle cx="2122.5" cy="313.5" r="13.8" fill="none" stroke="#707070" stroke-width="1.8"/>
<path d="M2113.5 313.5 H2131.5 M2122.5 304.5 V322.5" stroke="#707070" stroke-width="1.8"/>
<path d="M2133 324 L2145 336" stroke="#707070" stroke-width="3.2" stroke-linecap="round"/>
<circle cx="2170.5" cy="313.5" r="13.8" fill="none" stroke="#707070" stroke-width="1.8"/>
<path d="M2161.5 313.5 H2179.5" stroke="#707070" stroke-width="1.8"/>
<path d="M2181 324 L2193 336" stroke="#707070" stroke-width="3.2" stroke-linecap="round"/>
<rect x="2204.5" y="299.5" width="38" height="38" rx="4" fill="none" stroke="#707070" stroke-width="1.8"/>
<path d="M2223.5 303.5 V315 M2218 309 L2223.5 303.5 L2229 309 M2223.5 322 V333.5 M2218 328 L2223.5 333.5 L2229 328" fill="none" stroke="#707070" stroke-width="1.8"/>
<text x="13.5" y="997" font-size="24" fill="#1F1F1F" textLength="69" lengthAdjust="spacingAndGlyphs">Ready</text>
<text x="2271" y="997" font-size="24" fill="#1F1F1F" text-anchor="end" textLength="358" lengthAdjust="spacingAndGlyphs" xml:space="preserve">Frame based  Offset=0  T=0.0400</text></svg></body></html>
